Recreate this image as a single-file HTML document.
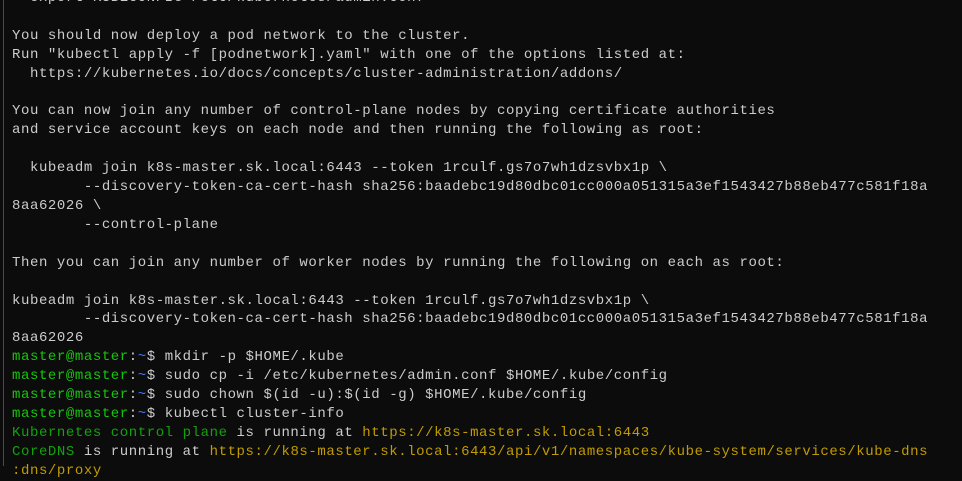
<!DOCTYPE html>
<html><head><meta charset="utf-8"><style>
html,body{margin:0;padding:0;background:#0c0c0c;width:962px;height:466px;overflow:hidden}
.bar{position:absolute;left:3px;top:0;width:1px;height:466px;background:#4a4a4a}
pre{position:absolute;left:12px;top:-11px;margin:0;font-family:"Liberation Mono",monospace;font-size:14px;line-height:18.9px;letter-spacing:0.58px;color:#cccccc;white-space:pre}
.g{color:#16c60c}.b{color:#3b78ff}.y{color:#c19c00}.d{color:#13a10e}
</style></head><body><div class="bar"></div><pre>  export KUBECONFIG=/etc/kubernetes/admin.conf

You should now deploy a pod network to the cluster.
Run "kubectl apply -f [podnetwork].yaml" with one of the options listed at:
  https://kubernetes.io/docs/concepts/cluster-administration/addons/

You can now join any number of control-plane nodes by copying certificate authorities
and service account keys on each node and then running the following as root:

  kubeadm join k8s-master.sk.local:6443 --token 1rculf.gs7o7wh1dzsvbx1p \
        --discovery-token-ca-cert-hash sha256:baadebc19d80dbc01cc000a051315a3ef1543427b88eb477c581f18a
8aa62026 \
        --control-plane

Then you can join any number of worker nodes by running the following on each as root:

kubeadm join k8s-master.sk.local:6443 --token 1rculf.gs7o7wh1dzsvbx1p \
        --discovery-token-ca-cert-hash sha256:baadebc19d80dbc01cc000a051315a3ef1543427b88eb477c581f18a
8aa62026
<span class="g">master@master</span>:<span class="b">~</span>$ mkdir -p $HOME/.kube
<span class="g">master@master</span>:<span class="b">~</span>$ sudo cp -i /etc/kubernetes/admin.conf $HOME/.kube/config
<span class="g">master@master</span>:<span class="b">~</span>$ sudo chown $(id -u):$(id -g) $HOME/.kube/config
<span class="g">master@master</span>:<span class="b">~</span>$ kubectl cluster-info
<span class="d">Kubernetes control plane</span> is running at <span class="y">https://k8s-master.sk.local:6443</span>
<span class="d">CoreDNS</span> is running at <span class="y">https://k8s-master.sk.local:6443/api/v1/namespaces/kube-system/services/kube-dns</span>
<span class="y">:dns/proxy</span></pre></body></html>
